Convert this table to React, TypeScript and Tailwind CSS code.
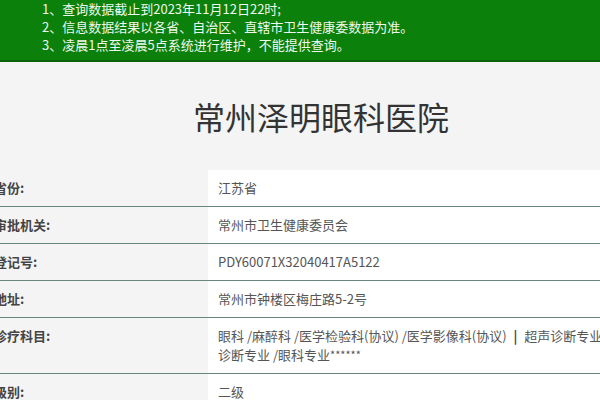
import * as React from "react"

// Hospital lookup result: green notice banner, title, and a label/value table.

const font = { fontFamily: '"Noto Sans CJK SC", "Noto Sans", sans-serif' }

const notes = [
  "1、查询数据截止到2023年11月12日22时;",
  "2、信息数据结果以各省、自治区、直辖市卫生健康委数据为准。",
  "3、凌晨1点至凌晨5点系统进行维护，不能提供查询。",
]

const rows: { label: string; value: React.ReactNode }[] = [
  { label: "省份:", value: "江苏省" },
  { label: "审批机关:", value: "常州市卫生健康委员会" },
  { label: "登记号:", value: "PDY60071X32040417A5122" },
  { label: "地址:", value: "常州市钟楼区梅庄路5-2号" },
  {
    label: "诊疗科目:",
    value: (
      <>
        <span className="block whitespace-nowrap">
          眼科 /麻醉科 /医学检验科(协议) /医学影像科(协议){" "}
          <span className="px-[4px] font-bold text-[#444]">|</span> 超声诊断专业 /心电诊断专业 /X线
        </span>
        <span className="block whitespace-nowrap">
          诊断专业 /眼科专业<span className="text-[11px] align-top">******</span>
        </span>
      </>
    ),
  },
  { label: "级别:", value: "二级" },
]

export default function App() {
  return (
    <div
      className="w-[600px] h-[400px] overflow-hidden bg-[#f4f4f4]"
      style={font}
    >
      <div className="bg-[#0b800b] border-b-2 border-[#0a610a] pl-[42px] pb-[6px] text-[13px] leading-[18px] text-[#eef8ee]">
        {notes.map((n) => (
          <p key={n}>{n}</p>
        ))}
      </div>

      <div className="ml-[-20px] w-[682px]">
        <h1 className="mt-[34px] text-center text-[32px] leading-[40px] text-[#333]">
          常州泽明眼科医院
        </h1>

        <div className="mt-[34px]">
          {rows.map((r) => (
            <div
              key={r.label}
              className="flex border-b border-[#68877c] text-[13px] leading-[19px]"
            >
              <div className="w-[228px] shrink-0 pl-[14px] pt-[8px] pb-[9px] font-bold text-[#444]">
                {r.label}
              </div>
              <div className="flex-1 bg-white pl-[10px] pt-[8px] pb-[9px] text-[#555]">
                {r.value}
              </div>
            </div>
          ))}
        </div>
      </div>
    </div>
  )
}
